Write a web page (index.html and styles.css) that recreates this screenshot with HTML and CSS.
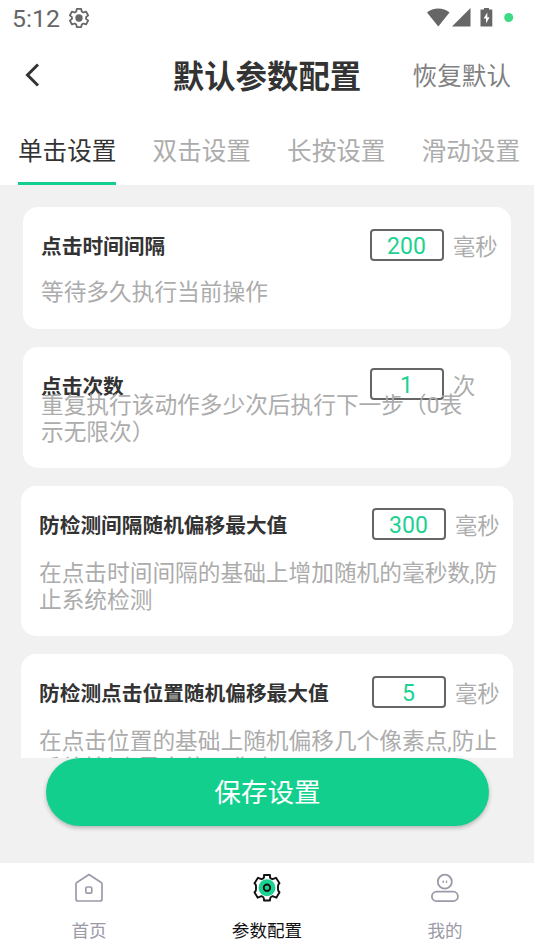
FILE: index.html
```html
<!DOCTYPE html>
<html lang="zh-CN">
<head>
<meta charset="utf-8">
<title>默认参数配置</title>
<link rel="stylesheet" href="styles.css">
</head>
<body>
<div class="screen">
  <div class="status">
    <span class="time">5:12</span>
    <svg class="gear" width="22" height="22" viewBox="0 0 24 24" fill="none" stroke="#666" stroke-width="2" stroke-linejoin="round"><path d="M9.600 2h4.800l.6 3 1.700 1 2.900-1 2.400 4.100-2.300 2v1.800l2.300 2-2.400 4.100-2.900-1-1.700 1-.6 3H9.600L9 19l-1.700-1-2.900 1L2 14.900l2.300-2v-1.800L2 9.100 4.400 5l2.900 1L9 5z"/><circle cx="12" cy="12" r="3" fill="#666"/></svg>
    <svg class="signals" width="90" height="22" viewBox="0 0 90 22"><path d="M0 4.500C6-1 16.500-1 22.500 4.500L11.300 18.500z" fill="#666"/><path d="M43.500 0v18.500H25z" fill="#666"/><path d="M57 0h5v1.600h3.300V18.500H53.500V1.600H57z" fill="#666"/><path d="M60.300 4.500l-3.700 6h2.400v5l3.600-6.300h-2.300z" fill="#fff"/><circle cx="81.700" cy="9.500" r="4.500" fill="#3ddc84"/></svg>
  </div>
  <header class="bar">
    <svg class="back" width="16" height="24" viewBox="0 0 16 24" fill="none" stroke="#333" stroke-width="3"><path d="M14 1.500L3.500 12 14 22.500"/></svg>
    <h1>默认参数配置</h1>
    <span class="reset">恢复默认</span>
  </header>
  <nav class="tabs">
    <span class="tab on">单击设置</span><span class="tab">双击设置</span><span class="tab">长按设置</span><span class="tab">滑动设置</span>
  </nav>
  <main class="list">
    <section class="card short">
      <div class="head"><h2>点击时间间隔</h2><span class="field">200</span><span class="unit">毫秒</span></div>
      <p>等待多久执行当前操作</p>
    </section>
    <section class="card short tight">
      <div class="head"><h2>点击次数</h2><span class="field">1</span><span class="unit">次</span></div>
      <p>重复执行该动作多少次后执行下一步（0表<br>示无限次）</p>
    </section>
    <section class="card tall">
      <div class="head"><h2>防检测间隔随机偏移最大值</h2><span class="field">300</span><span class="unit">毫秒</span></div>
      <p>在点击时间间隔的基础上增加随机的毫秒数,防<br>止系统检测</p>
    </section>
    <section class="card tall">
      <div class="head"><h2>防检测点击位置随机偏移最大值</h2><span class="field">5</span><span class="unit">毫秒</span></div>
      <p>在点击位置的基础上随机偏移几个像素点,防止<br>系统检测(最大值20像素)</p>
    </section>
  </main>
  <div class="action"><button class="save">保存设置</button></div>
  <footer class="bottom">
    <div class="item">
      <svg width="30" height="30" viewBox="0 0 30 30" fill="none" stroke="#9c9aa8" stroke-width="1.700" stroke-linejoin="round"><path d="M15 1.500L27.200 9.500Q28 10 28 11V26Q28 28 26 28H4Q2 28 2 26V11Q2 10 2.800 9.500z"/><rect x="11.800" y="14" width="6" height="6.200" rx="1.500"/></svg>
      <span>首页</span>
    </div>
    <div class="item on">
      <svg width="30" height="30" viewBox="0 0 30 30" fill="none" stroke="#111" stroke-width="1.900" stroke-linejoin="round"><circle cx="15" cy="14.700" r="8.500" fill="#1bd291" stroke="none"/><path d="M12 2h6v2.500Q18.500 5.500 20.500 6.200L24 4.800 27.500 10.300Q26 11.500 26 13v3.400Q26 18 27.500 19.200L24.300 24.700 20.500 23.200Q18 24.200 18 26v1.500h-6V26Q12 24.200 9.500 23.200L5.700 24.700 2.500 19.200Q4 18 4 16.400V13Q4 11.500 2.500 10.300L6 4.800 9.500 6.200Q11.500 5.500 12 4.500z"/><circle cx="15" cy="14.700" r="3.200"/></svg>
      <span>参数配置</span>
    </div>
    <div class="item">
      <svg width="30" height="30" viewBox="0 0 30 30" fill="none" stroke="#9c9aa8" stroke-width="1.800"><circle cx="14.800" cy="8.700" r="7"/><path d="M13.300 7.500v2.400M16.500 7.500v2.400" stroke-width="1.300"/><rect x="1.900" y="18.700" width="26" height="9.400" rx="4.700"/></svg>
      <span>我的</span>
    </div>
  </footer>
</div>
</body>
</html>
```
FILE: styles.css
```css
* { box-sizing: border-box; margin: 0; padding: 0; }
body { font-family: Roboto, "Noto Sans CJK SC", sans-serif; background: #f1f1f1; }
.screen { width: 534px; height: 949px; display: flex; flex-direction: column; overflow: hidden; white-space: nowrap; }
.status { flex: none; height: 38px; background: #fff; display: flex; align-items: center; padding: 0 18px 0 12px; color: #666; }
.time { font-size: 24.800px; line-height: 30px; margin-top: -1px; }
.gear { margin-left: 8px; margin-top: -2px; }
.signals { margin-left: auto; margin-right: -1px; margin-top: -1px; }
.bar { flex: none; height: 77px; background: #fff; display: grid; grid-template-columns: 1fr auto 1fr; align-items: center; padding: 0 23px 3px 24px; }
h1 { font-size: 31.400px; line-height: 40px; padding-top: 6px; margin-left: -1px; font-weight: 700; color: #333; }
.reset { justify-self: end; font-size: 24.600px; line-height: 36px; padding-top: 3px; color: #808080; }
.tabs { flex: none; height: 70px; background: #fff; display: flex; justify-content: space-between; padding: 0 14px 0 18px; }
.tab { font-size: 24.600px; line-height: 70px; height: 70px; padding-top: 2px; color: #acacac; }
.tab.on { color: #333; border-bottom: 3px solid #12cf8d; }
.list { flex: none; height: 573px; overflow: hidden; padding: 22.400px 21px 0; display: flex; flex-direction: column; gap: 18px; }
.card { flex: none; background: #fff; border-radius: 15px; padding: 21.600px 0 0 18px; }
.short { height: 121.500px; margin: 0 2px; }
.tall { height: 150px; }
.head { height: 32px; display: flex; align-items: center; }
h2 { flex: 1; font-size: 20.700px; line-height: 30px; padding-top: 5px; font-weight: 700; color: #333; }
.field { width: 74px; height: 32px; border: 2px solid #666; border-radius: 4px; color: #1bd291; font-size: 23px; line-height: 30px; padding-top: 1px; text-align: center; }
.unit { width: 58px; margin-left: 9.500px; font-size: 22.300px; line-height: 30px; padding-top: 4px; color: #acacac; }
.card p { position: relative; font-size: 22.700px; line-height: 26.500px; color: #acacac; margin-top: 19.500px; }
.card.tight p { margin-top: -7px; }
.card.tall p { margin-top: 21.500px; }
.action { flex: none; height: 105px; padding: 0 45px 0 46px; }
.save { display: block; width: 443px; height: 67.500px; border: 0; border-radius: 34px; background: #12cf8d; box-shadow: 0 2px 4px rgba(0,0,0,.25); color: #fff; font: 26.600px/68px Roboto, "Noto Sans CJK SC", sans-serif; padding-top: 1px; }
.bottom { flex: none; height: 86px; background: #fff; display: flex; }
.item { flex: 1; display: flex; flex-direction: column; align-items: center; padding-top: 10px; font-size: 17.600px; color: #9c9aa8; }
.item span { line-height: 26px; margin-top: 15px; }
.item.on { color: #111; }
```
